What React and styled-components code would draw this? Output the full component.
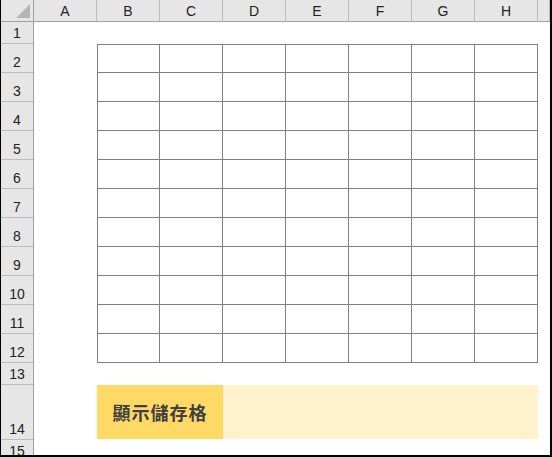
import React from "react";
import styled, { createGlobalStyle } from "styled-components";

const GlobalStyle = createGlobalStyle`
  html, body {
    margin: 0;
    padding: 0;
    background: #ffffff;
  }
`;

const COLS = ["A", "B", "C", "D", "E", "F", "G", "H", ""];
const ROWS = [
  { n: 1, h: 22 },
  { n: 2, h: 29 },
  { n: 3, h: 29 },
  { n: 4, h: 29 },
  { n: 5, h: 29 },
  { n: 6, h: 29 },
  { n: 7, h: 29 },
  { n: 8, h: 29 },
  { n: 9, h: 29 },
  { n: 10, h: 29 },
  { n: 11, h: 29 },
  { n: 12, h: 29 },
  { n: 13, h: 22 },
  { n: 14, h: 55 },
  { n: 15, h: 22 },
];

const Sheet = styled.div`
  box-sizing: border-box;
  width: 552px;
  height: 457px;
  overflow: hidden;
  border-left: 1px solid #000;
  border-right: 2px solid #000;
  border-bottom: 2px solid #000;
  display: grid;
  grid-template-columns: 33px repeat(8, 63px) 1fr;
  grid-template-rows: 22px ${ROWS.map((r) => r.h + "px").join(" ")};
  font-family: "Liberation Sans", Arial, sans-serif;
  background: #fff;
`;

const Corner = styled.div`
  position: relative;
  background: #e6e6e6;
  border-right: 1px solid #9f9f9f;
  border-bottom: 1px solid #9f9f9f;
  &::after {
    content: "";
    position: absolute;
    right: 3px;
    bottom: 3px;
    width: 0;
    height: 0;
    border-left: 14px solid transparent;
    border-bottom: 14px solid #b5b5b5;
  }
`;

const ColHead = styled.div`
  background: #e6e6e6;
  border-right: 1px solid #bcbcbc;
  border-bottom: 1px solid #9f9f9f;
  display: flex;
  align-items: center;
  justify-content: center;
  font-size: 14px;
  color: #222;
  padding-top: 1px;
`;

const RowHead = styled.div`
  background: #e6e6e6;
  border-right: 1px solid #9f9f9f;
  border-bottom: 1px solid #bcbcbc;
  display: flex;
  align-items: flex-end;
  justify-content: center;
  font-size: 14px;
  color: #222;
  padding-bottom: 2px;
  box-sizing: border-box;
`;

const Cell = styled.div`
  box-sizing: border-box;
  border-left: ${(p) => (p.$tl ? "1px solid #808080" : "none")};
  border-top: ${(p) => (p.$tt ? "1px solid #808080" : "none")};
  border-right: ${(p) => (p.$table ? "1px solid #808080" : "none")};
  border-bottom: ${(p) => (p.$table ? "1px solid #808080" : "none")};
`;

const Label = styled.div`
  grid-column: 3 / span 2;
  background: #ffd966;
  margin-bottom: 1px;
  display: flex;
  align-items: center;
  justify-content: center;
  font-family: "Noto Sans CJK TC", "Noto Sans", sans-serif;
  font-weight: 700;
  font-size: 18px;
  color: #404040;
  letter-spacing: 1px;
`;

const Fill = styled.div`
  grid-column: 5 / span 5;
  background: #fff2cc;
  margin-bottom: 1px;
`;

const Blank = styled.div``;

export default function App() {
  return (
    <>
      <GlobalStyle />
      <Sheet>
        <Corner />
        {COLS.map((c, i) => (
          <ColHead key={"c" + i}>{c}</ColHead>
        ))}
        {ROWS.map((r) => {
          const cells = [];
          cells.push(<RowHead key={"r" + r.n}>{r.n}</RowHead>);
          if (r.n === 14) {
            cells.push(<Blank key="a14" />);
            cells.push(<Label key="lbl">顯示儲存格</Label>);
            cells.push(<Fill key="fill" />);
            cells.push(<Blank key="i14" />);
            return cells;
          }
          COLS.forEach((c, i) => {
            const inTable = r.n >= 2 && r.n <= 12 && i >= 1 && i <= 7;
            cells.push(
              <Cell
                key={r.n + "-" + i}
                $table={inTable}
                $tl={inTable && i === 1}
                $tt={inTable && r.n === 2}
              />
            );
          });
          return cells;
        })}
      </Sheet>
    </>
  );
}
